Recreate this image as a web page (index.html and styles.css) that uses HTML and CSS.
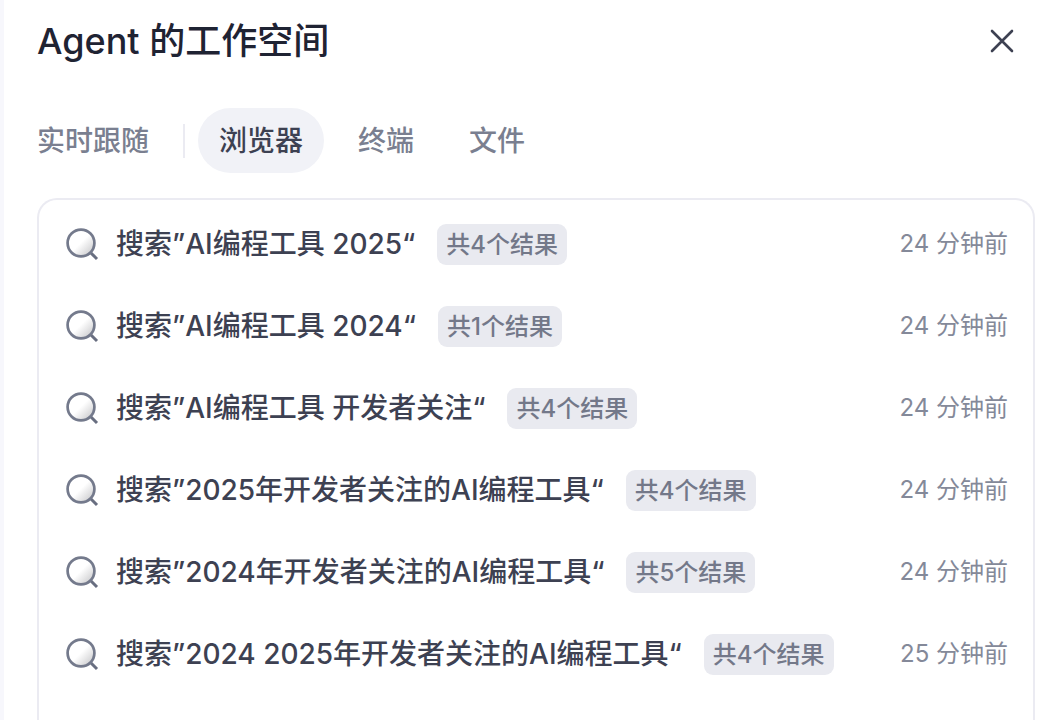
FILE: index.html
```html
<!DOCTYPE html>
<html lang="zh-CN">
<head>
    <meta charset="UTF-8">
    <meta name="viewport" content="width=device-width, initial-scale=1">
    <title>Agent 的工作空间</title>
    <link rel="stylesheet" href="styles.css">
</head>
<body>
    <!-- Shared icon -->
    <svg class="sprite" width="0" height="0" aria-hidden="true">
        <defs>
            <linearGradient id="lens" x1="0.2" y1="0.2" x2="0.85" y2="0.85">
                <stop offset="0.45" stop-color="#ffffff"/>
                <stop offset="1" stop-color="#d2d2d4"/>
            </linearGradient>
            <symbol id="icon-search" viewBox="0 0 34 34">
                <path d="M25 25L32 32" stroke="#686e80" stroke-width="3"/>
                <circle cx="16" cy="16" r="13.4" fill="url(#lens)" stroke="#747a8c" stroke-width="2.7"/>
            </symbol>
        </defs>
    </svg>

    <main class="workspace">
        <header class="workspace-header">
            <h1>Agent 的工作空间</h1>
            <button class="close-button" type="button" aria-label="关闭">
                <svg width="24" height="24" viewBox="0 0 24 24" aria-hidden="true">
                    <path d="M2 2L22 22M22 2L2 22"/>
                </svg>
            </button>
        </header>

        <nav class="tabs">
            <button class="tab tab-follow" type="button">实时跟随</button>
            <span class="tab-divider"></span>
            <button class="tab active" type="button">浏览器</button>
            <button class="tab" type="button">终端</button>
            <button class="tab" type="button">文件</button>
        </nav>

        <ul class="history">
            <li class="history-item">
                <svg class="search-icon" aria-hidden="true"><use href="#icon-search"/></svg>
                <span class="query">搜索”AI编程工具 2025“</span>
                <span class="badge">共4个结果</span>
                <time>24 分钟前</time>
            </li>
            <li class="history-item">
                <svg class="search-icon" aria-hidden="true"><use href="#icon-search"/></svg>
                <span class="query">搜索”AI编程工具 2024“</span>
                <span class="badge">共1个结果</span>
                <time>24 分钟前</time>
            </li>
            <li class="history-item">
                <svg class="search-icon" aria-hidden="true"><use href="#icon-search"/></svg>
                <span class="query">搜索”AI编程工具 开发者关注“</span>
                <span class="badge">共4个结果</span>
                <time>24 分钟前</time>
            </li>
            <li class="history-item">
                <svg class="search-icon" aria-hidden="true"><use href="#icon-search"/></svg>
                <span class="query">搜索”2025年开发者关注的AI编程工具“</span>
                <span class="badge">共4个结果</span>
                <time>24 分钟前</time>
            </li>
            <li class="history-item">
                <svg class="search-icon" aria-hidden="true"><use href="#icon-search"/></svg>
                <span class="query">搜索”2024年开发者关注的AI编程工具“</span>
                <span class="badge">共5个结果</span>
                <time>24 分钟前</time>
            </li>
            <li class="history-item">
                <svg class="search-icon" aria-hidden="true"><use href="#icon-search"/></svg>
                <span class="query">搜索”2024 2025年开发者关注的AI编程工具“</span>
                <span class="badge">共4个结果</span>
                <time>25 分钟前</time>
            </li>
        </ul>
    </main>
</body>
</html>
```

FILE: styles.css
```css
* {
    box-sizing: border-box;
}

body {
    margin: 0;
    font-family: Inter, "Noto Sans CJK SC", sans-serif;
    background-color: #ffffff;
    color: #3d4152;
}

button {
    padding: 0;
    border: none;
    background: none;
    font-family: inherit;
    cursor: pointer;
}

.sprite {
    display: block;
}

.workspace {
    display: flex;
    flex-direction: column;
    min-height: 100vh;
    padding: 15px 29px 0 33px;
    border-left: 4px solid #f7f7fc; /* edge of the page behind the panel */
}

.workspace-header {
    display: flex;
    align-items: center;
    justify-content: space-between;
    padding-right: 21px;
}

h1 {
    margin: 0;
    font-size: 36px;
    font-weight: 500;
    line-height: 52px;
    color: #1f2333;
}

.close-button {
    display: flex;
}

.close-button path {
    fill: none;
    stroke: #3d4152;
    stroke-width: 2.6;
    stroke-linecap: round;
}

/* Tabs */
.tabs {
    display: flex;
    align-items: center;
    margin-top: 41px;
}

.tab {
    height: 65px;
    padding: 0 21px;
    border-radius: 33px;
    font-size: 28px;
    font-weight: 500;
    line-height: 40px;
    color: #7a7f90;
    margin-left: 13px;
}

.tab.tab-follow {
    padding: 0;
    margin-left: 0;
}

.tab.active {
    background-color: #f1f2f7;
    color: #3d4152;
}

.tab-divider {
    width: 2px;
    height: 34px;
    margin-left: 34px;
    background-color: #ebebf2;
}

/* Search history, open at the bottom edge */
.history {
    flex: 1;
    margin: 25px 0 0;
    padding: 3px 25px 0 26px;
    border: 2px solid #ebebf2;
    border-bottom: none;
    border-radius: 20px 20px 0 0;
    list-style: none;
}

.history-item {
    display: flex;
    align-items: center;
    height: 82px;
    white-space: nowrap;
}

.search-icon {
    flex: none;
    width: 34px;
    height: 34px;
    margin-right: 17px;
}

.query {
    font-size: 28px;
    font-weight: 500;
    line-height: 40px;
}

.badge {
    margin-left: 22px;
    padding: 0 9px;
    border-radius: 9px;
    background-color: #e9eaf0;
    font-size: 24px;
    font-weight: 500;
    line-height: 41px;
    color: #737889;
}

time {
    margin-left: auto;
    font-size: 24px;
    line-height: 40px;
    color: #848999;
}
```
